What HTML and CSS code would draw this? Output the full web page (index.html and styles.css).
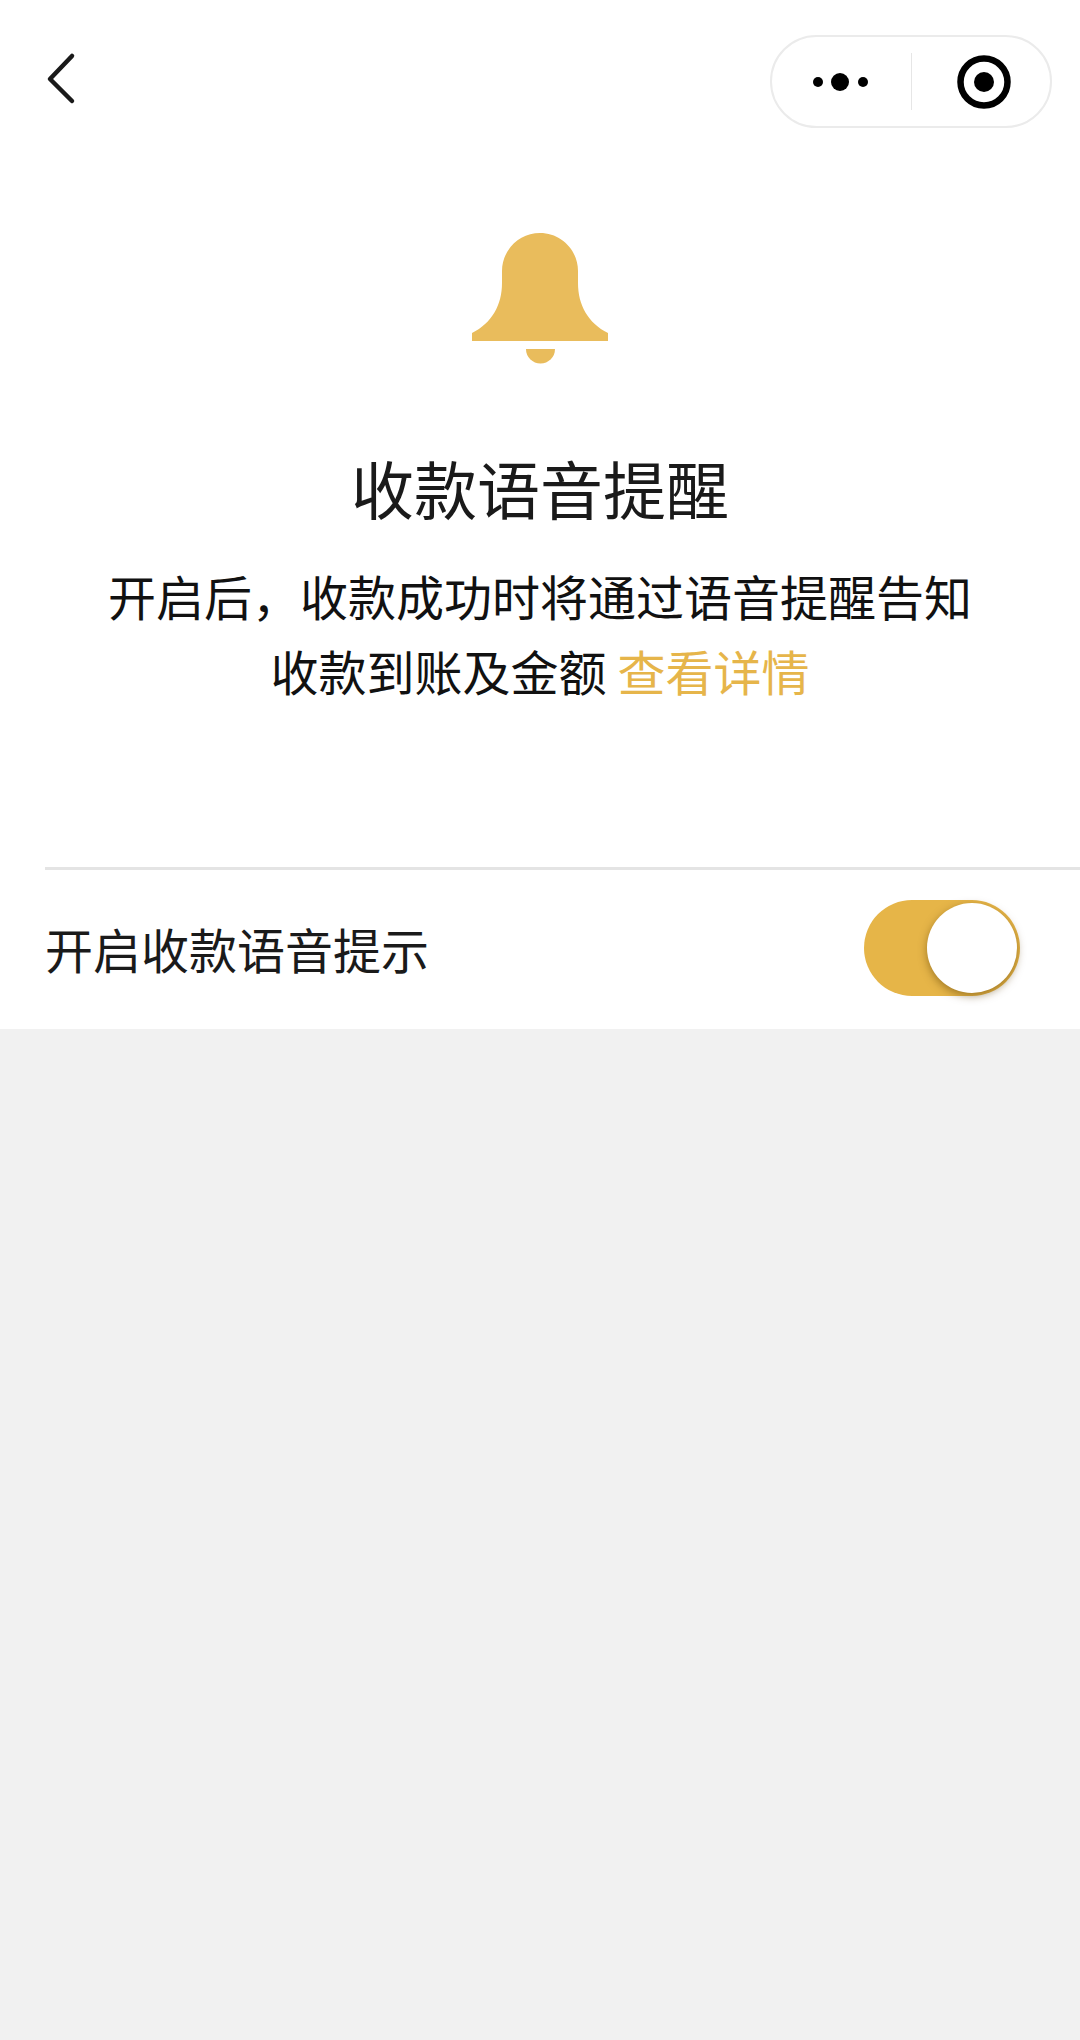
FILE: index.html
```html
<!DOCTYPE html>
<html lang="zh-CN">

<head>
  <meta charset="UTF-8">
  <title>收款语音提醒</title>
  <link rel="stylesheet" href="styles.css">
</head>

<body>

  <div class="page">
    <div class="nav">
      <svg class="back" width="40" height="93" viewBox="0 0 40 93">
        <path d="M32 21 L10 44 L32 66" fill="none" stroke="#1a1a1a" stroke-width="4.5" stroke-linecap="round" stroke-linejoin="round" />
      </svg>
      <div class="capsule">
        <div class="capsule-btn">
          <svg width="64" height="20" viewBox="0 0 64 20">
            <circle cx="9" cy="10" r="5" fill="#000" />
            <circle cx="31" cy="10" r="9" fill="#000" />
            <circle cx="54" cy="10" r="5" fill="#000" />
          </svg>
        </div>
        <div class="capsule-line"></div>
        <div class="capsule-btn">
          <svg class="ring" width="54" height="54" viewBox="0 0 54 54">
            <circle cx="27" cy="27" r="23.5" fill="none" stroke="#000" stroke-width="6.5" />
            <circle cx="27" cy="27" r="10" fill="#000" />
          </svg>
        </div>
      </div>
    </div>

    <div class="intro">
      <svg class="bell" width="136" height="131" viewBox="0 0 136 131">
        <path d="M68 0 C47 0 30 17 30 38 V50 C30 72 20 90 0 100 V108 H136 V100 C116 90 106 72 106 50 V38 C106 17 89 0 68 0 Z" fill="#e9bc5c" />
        <path d="M54 116 H83 A14.5 14.5 0 0 1 54 116 Z" fill="#e9bc5c" />
      </svg>
      <h2 class="title">收款语音提醒</h2>
      <p class="desc">开启后，收款成功时将通过语音提醒告知<br>收款到账及金额 <span class="link">查看详情</span></p>
    </div>

    <div class="setting">
      <div class="setting-row">
        <span class="setting-label">开启收款语音提示</span>
        <div class="switch">
          <div class="switch-knob"></div>
        </div>
      </div>
    </div>
  </div>

</body>

</html>
```

FILE: styles.css
```css
body {
  margin: 0;
  background: #f1f1f1;
  font-family: "Noto Sans CJK SC", "Liberation Sans", sans-serif;
  color: #1a1a1a;
}

.page {
  min-height: 2040px;
}

.nav {
  display: flex;
  justify-content: space-between;
  padding: 35px 28px 0 40px;
  background: white;
}

.capsule {
  display: flex;
  align-items: center;
  box-sizing: border-box;
  width: 282px;
  height: 93px;
  border: 2px solid #ebebeb;
  border-radius: 47px;
  background: white;
}

.capsule-btn {
  display: flex;
  flex: 1;
  justify-content: center;
  align-items: center;
}

.ring {
  margin-left: 6px;
}

.capsule-line {
  width: 1px;
  height: 57px;
  background: #e6e6e6;
}

.intro {
  padding: 105px 0 0;
  background: white;
  text-align: center;
}

.bell {
  display: block;
  margin: 0 auto;
}

.title {
  margin: 78px 0 0;
  font-size: 63px;
  font-weight: 400;
  line-height: 90px;
}

.desc {
  margin: 26px 0 0;
  font-size: 48px;
  line-height: 75px;
  color: #111;
}

.link {
  color: #e6b54a;
}

.setting {
  padding: 159px 0 0 45px;
  background: white;
}

.setting-row {
  display: flex;
  justify-content: space-between;
  align-items: center;
  box-sizing: content-box;
  height: 155px;
  padding: 0 60px 4px 0;
  border-top: 3px solid #e4e4e4;
}

.setting-label {
  font-size: 48px;
}

.switch {
  position: relative;
  width: 156px;
  height: 96px;
  border-radius: 48px;
  background: #e6b548;
}

.switch-knob {
  position: absolute;
  top: 3px;
  right: 3px;
  width: 90px;
  height: 90px;
  border-radius: 50%;
  background: white;
  box-shadow: 0 3px 8px rgba(90, 60, 0, 0.5);
}
```
